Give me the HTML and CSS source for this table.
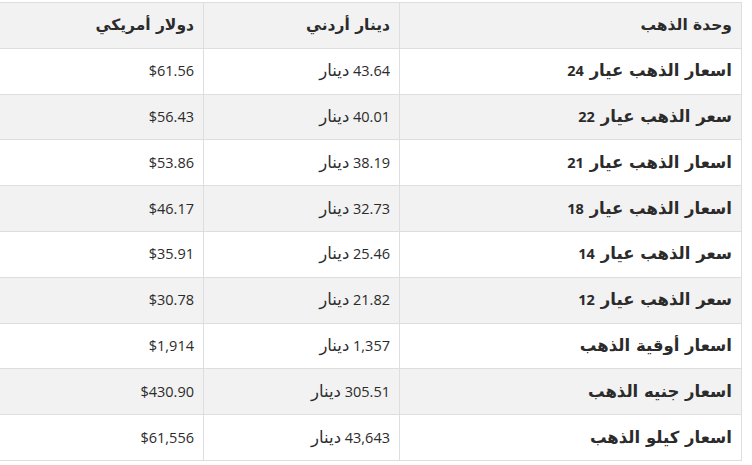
FILE: index.html
```html
<!DOCTYPE html>
<html lang="ar" dir="rtl">
<head>
<meta charset="utf-8">
<link rel="stylesheet" href="styles.css">
</head>
<body>
<div class="wrap">
<table class="gold">
  <colgroup>
    <col class="c-unit">
    <col class="c-jod">
    <col class="c-usd">
  </colgroup>
  <thead>
    <tr><th><span class="ar">وحدة الذهب</span></th><th><span class="ar">دينار أردني</span></th><th><span class="ar">دولار أمريكي</span></th></tr>
  </thead>
  <tbody>
    <tr><td class="unit"><span class="ar">اسعار الذهب عيار</span> 24</td><td>43.64 <span class="ar">دينار</span></td><td>$61.56</td></tr>
    <tr><td class="unit"><span class="ar">سعر الذهب عيار</span> 22</td><td>40.01 <span class="ar">دينار</span></td><td>$56.43</td></tr>
    <tr><td class="unit"><span class="ar">اسعار الذهب عيار</span> 21</td><td>38.19 <span class="ar">دينار</span></td><td>$53.86</td></tr>
    <tr><td class="unit"><span class="ar">اسعار الذهب عيار</span> 18</td><td>32.73 <span class="ar">دينار</span></td><td>$46.17</td></tr>
    <tr><td class="unit"><span class="ar">سعر الذهب عيار</span> 14</td><td>25.46 <span class="ar">دينار</span></td><td>$35.91</td></tr>
    <tr><td class="unit"><span class="ar">سعر الذهب عيار</span> 12</td><td>21.82 <span class="ar">دينار</span></td><td>$30.78</td></tr>
    <tr><td class="unit"><span class="ar">اسعار أوقية الذهب</span></td><td>1,357 <span class="ar">دينار</span></td><td>$1,914</td></tr>
    <tr><td class="unit"><span class="ar">اسعار جنيه الذهب</span></td><td>305.51 <span class="ar">دينار</span></td><td>$430.90</td></tr>
    <tr><td class="unit"><span class="ar">اسعار كيلو الذهب</span></td><td>43,643 <span class="ar">دينار</span></td><td>$61,556</td></tr>
  </tbody>
</table>
</div>
</body>
</html>
```
FILE: styles.css
```css
html, body {
  margin: 0;
  padding: 0;
  background: #ffffff;
}
.wrap {
  padding: 2px 10px 0 0;
}
.gold {
  border-collapse: collapse;
  width: 742px;
  table-layout: fixed;
  font-family: "Open Sans", "DejaVu Sans", sans-serif;
  font-size: 14.5px;
  color: #2b2b2b;
}
.c-unit { width: 342px; }
.c-jod { width: 196px; }
.c-usd { width: 204px; }
.gold th, .gold td {
  border: 1px solid #dedede;
  height: 45.8px;
  padding: 0 9px;
  text-align: right;
  vertical-align: middle;
  box-sizing: border-box;
  line-height: 20px;
}
.gold tr > :last-child {
  border-left: none;
}
.gold th {
  font-weight: 700;
  background: #f2f2f2;
}
.gold tbody tr:nth-child(even) td {
  background: #f2f2f2;
}
.gold td.unit {
  font-weight: 700;
}
.ar {
  font-family: "DejaVu Sans", sans-serif;
  font-size: 16.5px;
}
.gold td.unit .ar {
  margin-left: 2px;
}
.gold th .ar {
  font-size: 15.5px;
}
```
